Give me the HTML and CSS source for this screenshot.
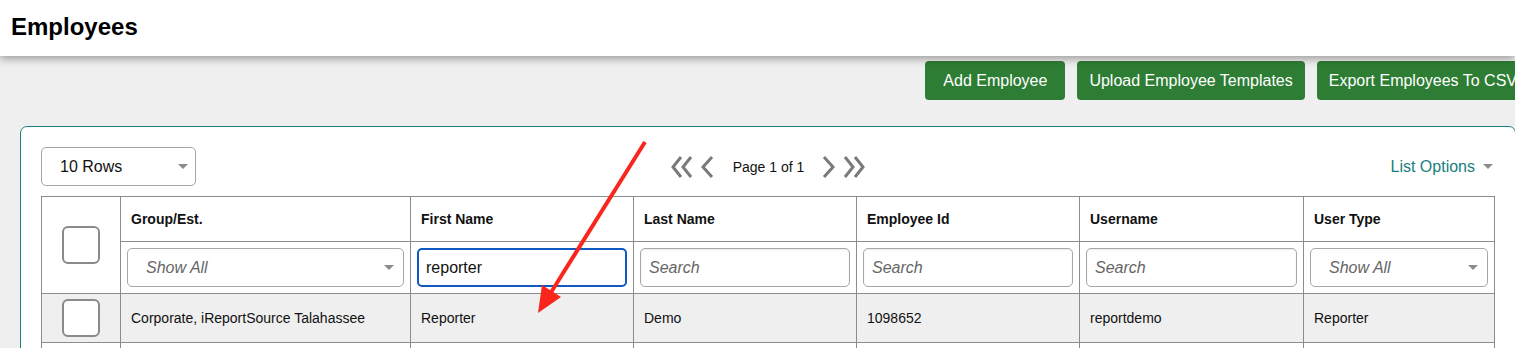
FILE: index.html
```html
<!DOCTYPE html>
<html lang="en">
<head>
  <meta charset="UTF-8">
  <title>Employees</title>
  <link rel="stylesheet" href="styles.css">
</head>
<body>

  <header class="topbar">
    <h1>Employees</h1>
  </header>

  <div class="toolbar">
    <button class="btn-green">Add Employee</button>
    <button class="btn-green btn-tight">Upload Employee Templates</button>
    <button class="btn-green btn-tight">Export Employees To CSV</button>
  </div>

  <section class="card">
    <div class="list-controls">
      <div class="fake-select rows-select">
        <span>10 Rows</span>
        <span class="caret"></span>
      </div>

      <div class="pager">
        <svg class="pager-icon" width="22" height="24" viewBox="0 0 22 24">
          <polyline points="10,2 2,12 10,22" />
          <polyline points="20,2 12,12 20,22" />
        </svg>
        <svg class="pager-icon single" width="14" height="24" viewBox="0 0 14 24">
          <polyline points="12,2 3,12 12,22" />
        </svg>
        <span class="page-label">Page 1 of 1</span>
        <svg class="pager-icon single" width="14" height="24" viewBox="0 0 14 24">
          <polyline points="2,2 11,12 2,22" />
        </svg>
        <svg class="pager-icon" width="22" height="24" viewBox="0 0 22 24">
          <polyline points="2,2 10,12 2,22" />
          <polyline points="12,2 20,12 12,22" />
        </svg>
      </div>

      <div class="list-options">
        List Options <span class="caret"></span>
      </div>
    </div>

    <table class="grid">
      <colgroup>
        <col style="width:79px">
        <col style="width:290px">
        <col style="width:223px">
        <col style="width:223px">
        <col style="width:223px">
        <col style="width:224px">
        <col>
      </colgroup>
      <thead>
        <tr class="head-row">
          <td class="check-cell" rowspan="2"><span class="checkbox"></span></td>
          <th>Group/Est.</th>
          <th>First Name</th>
          <th>Last Name</th>
          <th>Employee Id</th>
          <th>Username</th>
          <th>User Type</th>
        </tr>
        <tr class="filter-row">
          <td>
            <div class="fake-select filter-select">
              <span class="placeholder">Show All</span>
              <span class="caret"></span>
            </div>
          </td>
          <td><input type="text" class="filter-input focused" value="reporter"></td>
          <td><input type="text" class="filter-input" placeholder="Search"></td>
          <td><input type="text" class="filter-input" placeholder="Search"></td>
          <td><input type="text" class="filter-input" placeholder="Search"></td>
          <td>
            <div class="fake-select filter-select">
              <span class="placeholder">Show All</span>
              <span class="caret"></span>
            </div>
          </td>
        </tr>
      </thead>
      <tbody>
        <tr class="data-row">
          <td class="check-cell"><span class="checkbox"></span></td>
          <td>Corporate, iReportSource Talahassee</td>
          <td>Reporter</td>
          <td>Demo</td>
          <td>1098652</td>
          <td>reportdemo</td>
          <td>Reporter</td>
        </tr>
        <tr class="blank-row">
          <td></td><td></td><td></td><td></td><td></td><td></td><td></td>
        </tr>
      </tbody>
    </table>
  </section>

  <!-- red annotation arrow drawn over the screenshot -->
  <svg class="annotation" width="1515" height="348" viewBox="0 0 1515 348">
    <line x1="645" y1="142" x2="550" y2="294" />
    <polygon points="538,313 542,285 561,297" />
  </svg>

</body>
</html>
```

FILE: styles.css
```css
html, body {
  margin: 0;
  padding: 0;
}
body {
  font-family: 'Liberation Sans', Arial, sans-serif;
  background: #efefef;
  color: #111;
  width: 1515px;
  height: 348px;
  overflow: hidden;
  position: relative;
}
.topbar {
  height: 56px;
  background: #fff;
  box-shadow: 0 3px 8px rgba(0,0,0,0.35);
  position: relative;
  z-index: 1;
}
.topbar h1 {
  margin: 0;
  padding-left: 11px;
  font-size: 24px;
  line-height: 54px;
  font-weight: bold;
  color: #000;
}
.toolbar {
  display: flex;
  justify-content: flex-end;
  gap: 12px;
  margin-top: 5px;
  margin-right: -14px;
}
.btn-green {
  height: 39px;
  padding: 0 18px;
  border: none;
  border-radius: 4px;
  background: #2e7d34;
  color: #fff;
  font-family: inherit;
  font-size: 16px;
  white-space: nowrap;
  flex-shrink: 0;
  cursor: pointer;
}
.btn-tight {
  padding: 0 12px;
}
.card {
  margin: 26px 0 0 20px;
  width: 1454px;
  padding: 20px;
  background: #fff;
  border: 1px solid #17827f;
  border-radius: 7px;
}
.list-controls {
  display: grid;
  grid-template-columns: 1fr auto 1fr;
  align-items: center;
  height: 39px;
  margin-bottom: 10px;
}
.fake-select {
  display: flex;
  align-items: center;
  justify-content: space-between;
  box-sizing: border-box;
  height: 39px;
  background: #fff;
  border: 1px solid #a6a6a6;
  border-radius: 5px;
  font-size: 16px;
}
.rows-select {
  width: 155px;
  padding: 0 7px 0 18px;
  color: #111;
}
.caret {
  width: 0;
  height: 0;
  border-left: 5px solid transparent;
  border-right: 5px solid transparent;
  border-top: 5px solid #8c8c8c;
}
.pager {
  display: flex;
  align-items: center;
}
.pager-icon {
  fill: none;
  stroke: #7a7a7a;
  stroke-width: 3;
}
.pager-icon.single {
  margin: 0 7px;
}
.page-label {
  font-size: 14px;
  margin: 0 11px 0 12px;
}
.list-options {
  justify-self: end;
  display: flex;
  align-items: center;
  gap: 8px;
  margin-right: 2px;
  color: #17807c;
  font-size: 16px;
}
.grid {
  width: 1454px;
  table-layout: fixed;
  border-collapse: collapse;
}
.grid th, .grid td {
  border: 1px solid #8c8c8c;
  text-align: left;
  font-size: 14px;
  padding: 0 10px;
}
.grid th {
  font-weight: bold;
}
.head-row {
  height: 45px;
}
.filter-row {
  height: 52px;
}
.filter-row td {
  padding: 0 6px;
}
.check-cell {
  text-align: center !important;
}
.checkbox {
  display: inline-block;
  box-sizing: border-box;
  width: 38px;
  height: 38px;
  border: 2px solid #8a8a8a;
  border-radius: 6px;
  background: #fff;
  vertical-align: middle;
}
.filter-select {
  padding: 0 9px 0 18px;
}
.placeholder {
  font-style: italic;
  color: #666;
}
.filter-input {
  display: block;
  box-sizing: border-box;
  width: 100%;
  height: 39px;
  padding: 0 8px;
  border: 1px solid #a6a6a6;
  border-radius: 5px;
  font-family: inherit;
  font-size: 16px;
  color: #111;
  outline: none;
  box-shadow: inset 0 1px 2px rgba(0,0,0,0.08);
}
.filter-input::placeholder {
  font-style: italic;
  color: #666;
}
.filter-input.focused {
  border: 2px solid #1059c0;
  padding: 0 7px;
  box-shadow: none;
}
.data-row {
  height: 49px;
  background: #efefef;
}
.blank-row {
  height: 40px;
}
.annotation {
  position: absolute;
  top: 0;
  left: 0;
  pointer-events: none;
  z-index: 5;
}
.annotation line {
  stroke: #f8261c;
  stroke-width: 4;
}
.annotation polygon {
  fill: #f8261c;
}
```
